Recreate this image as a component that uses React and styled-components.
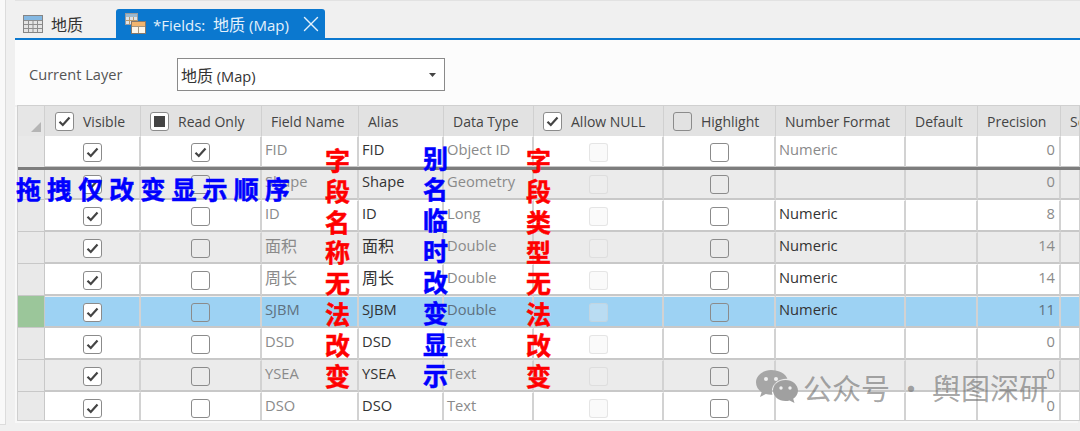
import React from 'react';
import styled, { createGlobalStyle, css } from 'styled-components';
import { X } from 'lucide-react';

const GlobalStyle = createGlobalStyle`
  html, body {
    margin: 0;
    padding: 0;
    background: #f3f3f3;
  }
  * {
    box-sizing: border-box;
  }
`;

const COLUMNS = '27px 96px 121px 97px 85px 90px 130px 112px 130px 72px 83px 40px';
const FONT = '"Open Sans", "Noto Sans CJK SC", sans-serif';

const Page = styled.div`
  position: relative;
  display: flex;
  width: 1080px;
  height: 431px;
  overflow: hidden;
  background: #f0f0f0;
  font-family: ${FONT};
  font-size: 14px;
  color: #333;
`;

const SideStrip = styled.div`
  flex: none;
  width: 15px;
`;

const SidePane = styled.div`
  width: 6px;
  height: 425px;
  background: #f9f9f9;
  border-right: 1px solid #dcdcdc;
  border-bottom: 1px solid #dcdcdc;
`;

const Main = styled.div`
  flex: 1;
  min-width: 0;
`;

const TabBar = styled.div`
  display: flex;
  align-items: flex-end;
  height: 40px;
  padding-top: 8px;
  border-top: 1px solid #e2e2e2;
  border-bottom: 2px solid #0b78cf;
`;

const Tab = styled.div`
  display: flex;
  align-items: center;
  height: 100%;
  font-size: 15px;
  ${(p) =>
    p.$active
      ? css`
          width: 209px;
          gap: 7px;
          padding: 0 1px 0 9px;
          background: #0b78cf;
          color: #e4f1fb;
          border-radius: 3px 3px 0 0;
        `
      : css`
          width: 101px;
          gap: 8px;
          padding-left: 8px;
          color: #333;
        `}
`;

const TabClose = styled(X)`
  margin-left: auto;
  color: #e4f1fb;
`;

const Han = styled.span`
  font-size: 16px;
`;

const LayerRow = styled.div`
  display: flex;
  align-items: center;
  height: 65px;
  padding: 2px 0 0 14px;
  background: #fcfcfc;
  font-size: 14.6px;
`;

const LayerLabel = styled.div`
  width: 148px;
  color: #555;
`;

const LayerSelect = styled.div`
  display: flex;
  align-items: center;
  justify-content: space-between;
  width: 268px;
  height: 33px;
  margin-top: 2px;
  padding: 0 8px 0 3px;
  background: #fff;
  border: 1px solid #8a8a8a;
`;

const Table = styled.div`
  height: 316px;
  margin-left: 2px;
  overflow: hidden;
  background: #ececec;
  border: 1px solid #cfcfcf;
  border-top: 0;
  box-shadow: -2px 2px 0 #f8f8f8;
`;

const HeaderRow = styled.div`
  display: grid;
  grid-template-columns: ${COLUMNS};
  height: 31px;
  background: #e2e2e2;
`;

const HeaderCell = styled.div`
  display: flex;
  align-items: center;
  gap: 9px;
  padding-left: ${(p) => (p.$wide ? 10 : 9)}px;
  border-right: 1px solid #d0d0d0;
  border-top: 1px solid #d0d0d0;
  white-space: nowrap;
  overflow: hidden;
  color: #444;
`;

const Corner = styled.div`
  position: relative;
  border-right: 1px solid #d0d0d0;
  border-top: 1px solid #d0d0d0;
  background: #e6e6e6;
`;

const CornerMark = styled.svg`
  position: absolute;
  right: 3px;
  bottom: 4px;
`;

const Row = styled.div`
  display: grid;
  grid-template-columns: ${COLUMNS};
  height: 32px;
  background: ${(p) => (p.$selected ? '#9dd2f3' : p.$even ? '#ebebeb' : '#fff')};
`;

const RowHead = styled.div`
  background: ${(p) => (p.$selected ? '#9bc69a' : '#e9e9e9')};
  border-right: 1px solid #c8c8c8;
  border-bottom: 1px solid #c8c8c8;
`;

const mutedText = (p) => (p.$selected ? '#5f7180' : '#8a8a8a');

const Cell = styled.div`
  display: flex;
  align-items: center;
  justify-content: ${(p) => (p.$right ? 'flex-end' : p.$center ? 'center' : 'flex-start')};
  padding: ${(p) => (p.$center ? '2px 0 0' : p.$right ? '0 4px 6px 0' : '0 0 6px 3px')};
  border-top: 1px solid ${(p) => (p.$selected ? '#efefef' : 'transparent')};
  border-right: 2px solid #d2d2d2;
  border-bottom: 2px solid #c8c8c8;
  font-size: 14.7px;
  white-space: nowrap;
  overflow: hidden;
  color: ${(p) => (p.$muted ? mutedText(p) : '#333')};
`;

const Box = styled.div`
  display: flex;
  align-items: center;
  justify-content: center;
  flex: none;
  width: 19px;
  height: 19px;
  border-radius: 3px;
  border: 1px solid ${(p) => (p.$disabled ? 'rgba(205, 205, 205, 0.45)' : '#8b8b8b')};
  background: ${(p) =>
    p.$disabled ? 'rgba(240, 240, 240, 0.35)' : p.$checked || p.$mark ? '#fff' : 'transparent'};
`;

const BoxMark = styled.div`
  width: 11px;
  height: 11px;
  background: #444;
`;

const Annotation = styled.div`
  position: absolute;
  font-family: "Noto Sans CJK SC", sans-serif;
  font-size: 25px;
  font-weight: 700;
  color: ${(p) => p.$color};
  -webkit-text-stroke: 0.5px ${(p) => p.$color};
  pointer-events: none;
`;

const VerticalNote = styled(Annotation)`
  left: ${(p) => p.$left}px;
  top: ${(p) => p.$top}px;
  width: 26px;
  line-height: ${(p) => p.$step}px;
  word-break: break-all;
`;

const HorizontalNote = styled(Annotation)`
  left: 16px;
  top: 171px;
  line-height: 34px;
  letter-spacing: 6.1px;
  white-space: nowrap;
`;

const DropLine = styled.div`
  position: absolute;
  left: 18px;
  right: 0;
  top: 167px;
  height: 3px;
  background: #7d7d7d;
`;

const Watermark = styled.div`
  position: absolute;
  left: 756px;
  top: 369px;
  display: flex;
  align-items: center;
  gap: 5px;
  font-family: "Noto Sans CJK SC", sans-serif;
  font-size: 29px;
  line-height: 36px;
  color: rgba(110, 110, 110, 0.62);
  white-space: nowrap;
`;

const CheckIcon = () => (
  <svg width="13" height="11" viewBox="0 0 13 11">
    <path d="M1.5 5.8 L4.8 9 L11.5 1.6" fill="none" stroke="#444" strokeWidth="2.2" />
  </svg>
);

const CheckBox = ({ checked, disabled, mark }) => (
  <Box $checked={checked} $disabled={disabled} $mark={mark}>
    {checked && <CheckIcon />}
    {mark && <BoxMark />}
  </Box>
);

const TableIcon = () => (
  <svg width="20" height="18" viewBox="0 0 20 18">
    <rect x="0.5" y="0.5" width="19" height="17" fill="#e4e4e4" stroke="#858585" />
    <rect x="1" y="1" width="18" height="4" fill="#84b8e2" />
    <path d="M1 5.500H19M1 9.500H19M1 13.500H19M5.500 5V17M10 5V17M14.500 5V17" stroke="#8e8e8e" fill="none" />
  </svg>
);

const FieldsIcon = () => (
  <svg width="21" height="21" viewBox="0 0 21 21">
    <rect x="0.5" y="0.500" width="12" height="11" fill="#dfe3e6" stroke="#9b9b9b" />
    <rect x="1" y="1" width="11" height="3" fill="#9ab9d0" />
    <path d="M1 7.500H12M4.500 4V11M8.500 4V11" stroke="#b99a6c" fill="none" />
    <rect x="6.500" y="8.500" width="14" height="12" fill="#fdf6ea" stroke="#86786a" />
    <rect x="7" y="9" width="13" height="4" fill="#f2b56e" />
    <path d="M7 13.500H20M13.500 13V20" stroke="#a8977f" fill="none" />
  </svg>
);

const WeChatIcon = () => (
  <svg width="42" height="34" viewBox="0 0 42 34">
    <path
      d="M15 0C6.700 0 0 5.600 0 12.500c0 3.900 2.200 7.400 5.600 9.700L4 27l5.800-3c1.700.5 3.500.8 5.200.8.5 0 1 0 1.500-.1-.4-1.200-.6-2.500-.6-3.800 0-6.800 6.400-12.200 14.300-12.200.4 0 .8 0 1.200.1C29.800 3.500 23 0 15 0z"
      fill="#a6a6a6"
    />
    <path
      d="M42 20.500C42 14.700 36.400 10 29.500 10S17 14.700 17 20.500 22.600 31 29.500 31c1.400 0 2.800-.2 4.100-.6L38.500 33l-1.300-4.200C40 26.900 42 23.900 42 20.500z"
      fill="#a0a0a0"
    />
    <circle cx="10" cy="9" r="2" fill="#f0f0f0" />
    <circle cx="20" cy="9" r="2" fill="#f0f0f0" />
    <circle cx="25" cy="18" r="1.700" fill="#f0f0f0" />
    <circle cx="34" cy="18" r="1.700" fill="#f0f0f0" />
  </svg>
);

const rows = [
  { name: 'FID', type: 'Object ID', readOnly: true, format: 'Numeric', formatMuted: true, precision: 0 },
  { name: 'Shape', type: 'Geometry', format: '', precision: 0 },
  { name: 'ID', type: 'Long', format: 'Numeric', precision: 8 },
  { name: '面积', han: true, type: 'Double', format: 'Numeric', precision: 14 },
  { name: '周长', han: true, type: 'Double', format: 'Numeric', precision: 14 },
  { name: 'SJBM', type: 'Double', format: 'Numeric', precision: 11, selected: true },
  { name: 'DSD', type: 'Text', format: '', precision: 0 },
  { name: 'YSEA', type: 'Text', format: '', precision: 0 },
  { name: 'DSO', type: 'Text', format: '', precision: 0 },
];

const App = () => (
  <>
    <GlobalStyle />
    <Page>
      <SideStrip>
        <SidePane />
      </SideStrip>
      <Main>
        <TabBar>
          <Tab>
            <TableIcon />
            <Han>地质</Han>
          </Tab>
          <Tab $active>
            <FieldsIcon />
            <span>*Fields:&nbsp; <Han>地质</Han> (Map)</span>
            <TabClose size={26} strokeWidth={1.3} />
          </Tab>
        </TabBar>
        <LayerRow>
          <LayerLabel>Current Layer</LayerLabel>
          <LayerSelect>
            <span><Han>地质</Han> (Map)</span>
            <svg width="7" height="4" viewBox="0 0 7 4">
              <path d="M0 0H7L3.500 4z" fill="#444" />
            </svg>
          </LayerSelect>
        </LayerRow>
        <Table>
          <HeaderRow>
            <Corner>
              <CornerMark width="10" height="10" viewBox="0 0 10 10">
                <path d="M10 0V10H0z" fill="#b5b5b5" />
              </CornerMark>
            </Corner>
            <HeaderCell $wide><CheckBox checked /><span>Visible</span></HeaderCell>
            <HeaderCell><CheckBox mark /><span>Read Only</span></HeaderCell>
            <HeaderCell>Field Name</HeaderCell>
            <HeaderCell>Alias</HeaderCell>
            <HeaderCell>Data Type</HeaderCell>
            <HeaderCell><CheckBox checked /><span>Allow NULL</span></HeaderCell>
            <HeaderCell><CheckBox /><span>Highlight</span></HeaderCell>
            <HeaderCell>Number Format</HeaderCell>
            <HeaderCell>Default</HeaderCell>
            <HeaderCell>Precision</HeaderCell>
            <HeaderCell>Scale</HeaderCell>
          </HeaderRow>
          {rows.map((row, i) => {
            const label = row.han ? <Han>{row.name}</Han> : row.name;
            return (
              <Row key={row.name} $even={i % 2 === 1} $selected={row.selected}>
                <RowHead $selected={row.selected} />
                <Cell $center $selected={row.selected}><CheckBox checked /></Cell>
                <Cell $center $selected={row.selected}><CheckBox checked={row.readOnly} /></Cell>
                <Cell $muted $selected={row.selected}>{label}</Cell>
                <Cell $selected={row.selected}>{label}</Cell>
                <Cell $muted $selected={row.selected}>{row.type}</Cell>
                <Cell $center $selected={row.selected}><CheckBox disabled /></Cell>
                <Cell $center $selected={row.selected}><CheckBox /></Cell>
                <Cell $muted={row.formatMuted} $selected={row.selected}>{row.format}</Cell>
                <Cell $selected={row.selected} />
                <Cell $right $muted $selected={row.selected}>{row.precision}</Cell>
                <Cell $selected={row.selected} />
              </Row>
            );
          })}
        </Table>
      </Main>
      <DropLine />
      <HorizontalNote $color="#0000ff">拖拽仅改变显示顺序</HorizontalNote>
      <VerticalNote $color="#ff0000" $left={325} $top={144} $step={30.8}>字段名称无法改变</VerticalNote>
      <VerticalNote $color="#0000ff" $left={423} $top={142} $step={31}>别名临时改变显示</VerticalNote>
      <VerticalNote $color="#ff0000" $left={526} $top={144} $step={30.8}>字段类型无法改变</VerticalNote>
      <Watermark>
        <WeChatIcon />
        <span>公众号 · 舆图深研</span>
      </Watermark>
    </Page>
  </>
);

export default App;
